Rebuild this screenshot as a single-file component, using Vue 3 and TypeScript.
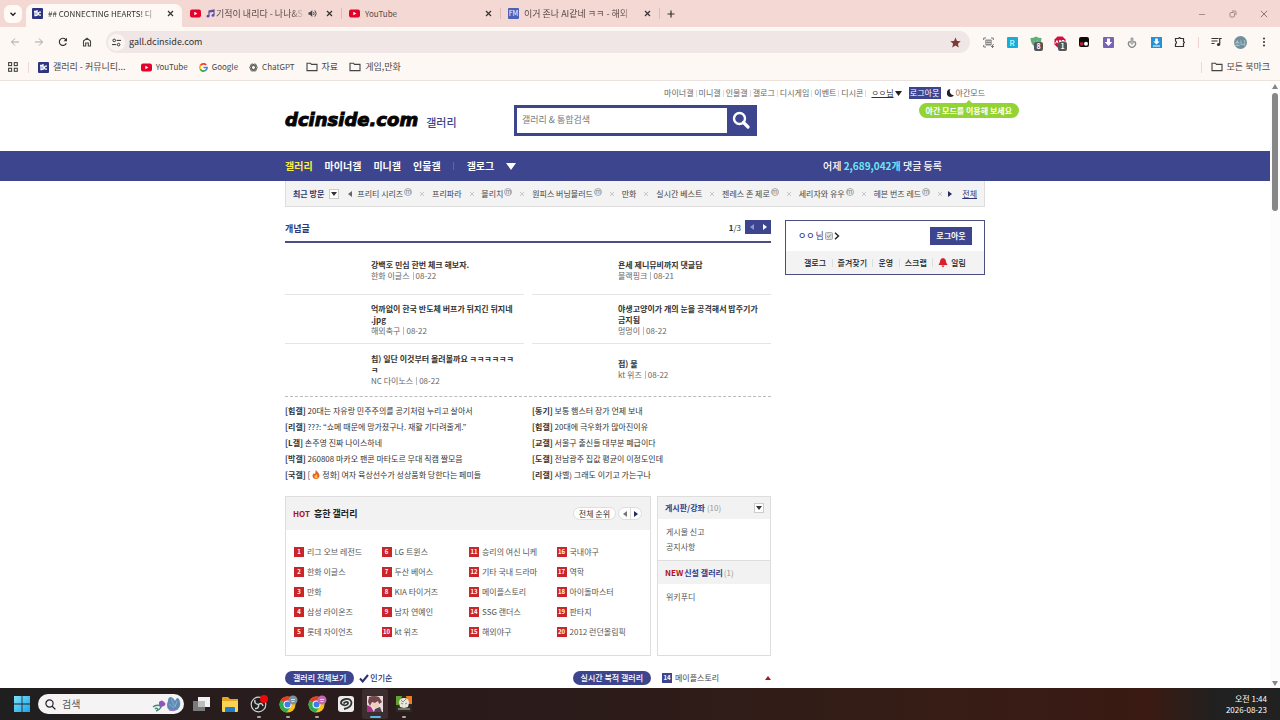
<script setup lang="ts">
interface Tab { icon: 'dc' | 'yt' | 'fm'; title: string; active?: boolean; audio?: boolean; note?: boolean; sep?: boolean; latin?: boolean }
interface Post { title: string; gallery: string; date: string }
interface Line { tag: string; text: string; fire?: boolean }

const tabs: Tab[] = [
  { icon: 'dc', title: '## CONNECTING HEARTS! 디', active: true, latin: true },
  { icon: 'yt', title: '기적이 내리다 - 나나&S', audio: true, note: true, sep: true },
  { icon: 'yt', title: 'YouTube', sep: true, latin: true },
  { icon: 'fm', title: '이거 존나 AI같네 ㅋㅋ - 해외', sep: true },
]
const utils: string[] = ['마이너갤', '미니갤', '인물갤', '갤로그', '디시게임', '이벤트', '디시콘']
const recents: { name: string; minor?: boolean }[] = [
  { name: '프리티 시리즈', minor: true }, { name: '프리파라' }, { name: '블리치', minor: true },
  { name: '원피스 버닝블러드', minor: true }, { name: '만화' }, { name: '실시간 베스트' },
  { name: '젠레스 존 제로', minor: true }, { name: '세리자와 유우', minor: true }, { name: '헤븐 번즈 레드', minor: true },
]
const posts: Post[] = [
  { title: '강백호 민심 한번 체크 해보자.', gallery: '한화 이글스', date: '08-22' },
  { title: '욘세 제니뮤비까지 댓글담', gallery: '블랙핑크', date: '08-21' },
  { title: '억까없이 한국 반도체 버프가 뒤지긴 뒤지네\n.jpg', gallery: '해외축구', date: '08-22' },
  { title: '야생고양이가 개의 눈을 공격해서 밥주기가\n금지됨', gallery: '멍멍이', date: '08-22' },
  { title: '칩) 일단 이것부터 올려볼까요 ㅋㅋㅋㅋㅋㅋ\nㅋ', gallery: 'NC 다이노스', date: '08-22' },
  { title: '접) 물', gallery: 'kt 위즈', date: '08-22' },
]
const lines: Line[] = [
  { tag: '힙갤', text: '20대는 자유랑 민주주의를 공기처럼 누리고 살아서' },
  { tag: '동기', text: '보통 햄스터 장가 언제 보내' },
  { tag: '리갤', text: '???: “쇼메 때문에 망가졌구나. 재활 기다려줄게.”' },
  { tag: '힙갤', text: '20대에 극우화가 많아진이유' },
  { tag: 'L갤', text: '손주영 진짜 나이스하네' },
  { tag: '교갤', text: '서울구 출신들 대부분 폐급이다' },
  { tag: '박갤', text: '260808 마카오 팬콘 마타도르 무대 직캠 짤모음' },
  { tag: '도갤', text: '전남광주 집값 평균이 이정도인데' },
  { tag: '국갤', text: '정화] 여자 육상선수가 성상품화 당한다는 페미들', fire: true },
  { tag: '리갤', text: '샤벨) 그래도 이기고 가는구나' },
]
const hot: string[] = [
  '리그 오브 레전드', '한화 이글스', '만화', '삼성 라이온즈', '롯데 자이언츠',
  'LG 트윈스', '두산 베어스', 'KIA 타이거즈', '남자 연예인', 'kt 위즈',
  '승리의 여신 니케', '기타 국내 드라마', '메이플스토리', 'SSG 랜더스', '해외야구',
  '국내야구', '역학', '아이돌마스터', '판타지', '2012 런던올림픽',
]
</script>

<template>
  <div class="desktop">
    <div class="tabstrip">
      <button class="tab-search" aria-label="탭 검색">
        <svg width="8" height="8" viewBox="0 0 8 8"><path d="M1.5 2.8 4 5.3 6.5 2.8" fill="none" stroke="#222" stroke-width="1.4" /></svg>
      </button>
      <div v-for="(t, i) in tabs" :key="i" class="tab" :class="{ active: t.active, sep: t.sep }">
        <svg v-if="t.icon === 'dc'" class="fav" width="11" height="11" viewBox="0 0 11 11"><rect width="11" height="11" rx="1" fill="#2d3582" /><path d="M2 3.5h1.5c2.4 0 2.4 4 0 4H3V3.5M5 2v6M9 4.2H7.6c-1.4 0-1.4 3 0 3H9" fill="none" stroke="#fff" stroke-width="1.3" /></svg>
        <svg v-else-if="t.icon === 'yt'" class="fav" width="11" height="11" viewBox="0 0 11 11"><rect y="1.5" width="11" height="8" rx="2" fill="#e4002b" /><path d="M4.3 3.7v3.6L7.4 5.5z" fill="#fff" /></svg>
        <span v-else class="fav fm">FM</span>
        <svg v-if="t.note" class="note" width="9" height="9" viewBox="0 0 9 9"><path d="M3 7V2l5-1v5M3 3.2l5-1" fill="none" stroke="#5d4fa0" stroke-width="1.2" /><circle cx="2" cy="7.2" r="1.4" fill="#5d4fa0" /><circle cx="7" cy="6.4" r="1.4" fill="#5d4fa0" /></svg>
        <span class="tab-title" :class="{ latin: t.latin, fade: t.title.length > 10 }">{{ t.title }}</span>
        <svg v-if="t.audio" class="audio" width="10" height="9" viewBox="0 0 10 9"><path d="M.5 3.2H2L4.3 1v7L2 5.8H.5z" fill="#444" /><path d="M5.500 3q1.300 1.500 0 3M6.800 1.400q2.800 3.100 0 6.200" fill="none" stroke="#444" stroke-width="1" /></svg>
        <button class="tab-close" aria-label="탭 닫기"><svg width="7" height="7" viewBox="0 0 7 7"><path d="M1 1l5 5M6 1 1 6" stroke="#333" stroke-width="1.2" /></svg></button>
      </div>
      <button class="new-tab" aria-label="새 탭"><svg width="8" height="8" viewBox="0 0 8 8"><path d="M4 .5v7M.5 4h7" stroke="#333" stroke-width="1.2" /></svg></button>
      <div class="window-btns">
        <button aria-label="최소화"><svg width="8" height="8" viewBox="0 0 8 8"><path d="M1 4.5h6" stroke="#a88f8c" /></svg></button>
        <button aria-label="이전 크기로"><svg width="8" height="8" viewBox="0 0 8 8"><rect x="1" y="2.5" width="4.5" height="4.5" rx="1" fill="none" stroke="#a08885" /><path d="M3 1h3q1 0 1 1v3" fill="none" stroke="#a08885" /></svg></button>
        <button aria-label="닫기"><svg width="8" height="8" viewBox="0 0 8 8"><path d="M.8.8l6.4 6.4M7.2.8.8 7.2" stroke="#8e7774" /></svg></button>
      </div>
    </div>

    <div class="browser-bar">
      <div class="toolbar">
        <button class="tool" aria-label="뒤로"><svg width="10" height="10" viewBox="0 0 10 10"><path d="M9 5H1.5M5 1.5 1.5 5 5 8.5" fill="none" stroke="#aaa5a2" /></svg></button>
        <button class="tool" aria-label="앞으로"><svg width="10" height="10" viewBox="0 0 10 10"><path d="M1 5h7.5M5 1.5 8.5 5 5 8.5" fill="none" stroke="#aaa5a2" /></svg></button>
        <button class="tool" aria-label="새로고침"><svg width="10" height="10" viewBox="0 0 10 10"><path d="M8.3 6.2A3.6 3.6 0 1 1 7.6 2.4L8.6 3.5" fill="none" stroke="#333" stroke-width="1.2" /><path d="M9 .8v3.4H5.6z" fill="#333" /></svg></button>
        <button class="tool" aria-label="홈"><svg width="10" height="10" viewBox="0 0 10 10"><path d="M1.5 4 5 1.2 8.5 4v5H6.3V6H3.7v3H1.5z" fill="none" stroke="#444" stroke-width="1.1" /></svg></button>
        <div class="address">
          <button class="site-info" aria-label="사이트 정보"><svg width="9" height="9" viewBox="0 0 9 9"><circle cx="2.2" cy="2.4" r="1.3" fill="none" stroke="#333" /><path d="M4.7 2.4H9M0 6.6h4.2" stroke="#333" /><circle cx="6.6" cy="6.6" r="1.3" fill="none" stroke="#333" /></svg></button>
          <input type="text" value="gall.dcinside.com" aria-label="주소창">
          <button class="star" aria-label="북마크"><svg width="11" height="11" viewBox="0 0 11 11"><path d="M5.5.5 7 4l3.7.3L7.9 6.700l.9 3.700-3.300-2-3.300 2 .9-3.700L.3 4.300 4 4z" fill="#7c3a32" /></svg></button>
        </div>
        <button class="tool" aria-label="화면 캡처"><svg width="11" height="11" viewBox="0 0 11 11"><path d="M.7 3V1H3M8 1h2.300v2M10.300 7v1M.7 8v2H3M8 9.500h3M9.500 8v3" fill="none" stroke="#777" /><rect x="2.300" y="2.500" width="6.400" height="6" rx="1" fill="#888" /><path d="M3 4.300h5M3 6.500h5" stroke="#ccc" /></svg></button>
        <button class="tool" aria-label="R"><span class="ext cyan">R</span></button>
        <button class="tool badge-host" aria-label="보호"><svg width="12" height="12" viewBox="0 0 12 12"><path d="M.5 2Q3.500 2 6 .5 8.500 2 11.500 2 11.500 9 6 11 .5 9 .5 2" fill="#5fae79" /><path d="M3.500 4.500l2 2 3-3" fill="none" stroke="#7fc596" /></svg><span class="count">8</span></button>
        <button class="tool badge-host" aria-label="차단"><svg width="12" height="12" viewBox="0 0 12 12"><path d="M3.500.5h5L11.500 3.500v5l-3 3h-5l-3-3v-5z" fill="#d0103f" /><path d="M1.500 7.500 3 4.500l1.200 3M5.500 4.500v3h1v-3zM8 4.500v3h2v-3z" fill="none" stroke="#fff" /></svg><span class="count">1</span></button>
        <button class="tool" aria-label="스크립트"><svg width="10" height="10" viewBox="0 0 10 10"><rect width="10" height="10" rx="2" fill="#0c0c0c" /><circle cx="2.700" cy="6.800" r="1.900" fill="#b5232b" /><circle cx="7" cy="6.800" r="2" fill="#fff" /></svg></button>
        <button class="tool" aria-label="다운로더"><svg width="11" height="11" viewBox="0 0 11 11"><rect width="11" height="11" rx="1" fill="#7a62b5" /><path d="M4 1.500h3V5h2.300L5.500 9 1.700 5H4z" fill="#fff" /></svg></button>
        <button class="tool" aria-label="저장"><svg width="10" height="11" viewBox="0 0 10 11"><path d="M4 1h2v3.500h1.700L5 7.500 2.300 4.500H4z" fill="#bbb" stroke="#888" stroke-width=".7" /><path d="M2.300 4.500A3.500 3.500 0 1 0 7.700 4.500" fill="none" stroke="#888" stroke-width="1.300" /></svg></button>
        <button class="tool" aria-label="내려받기"><svg width="11" height="11" viewBox="0 0 11 11"><rect width="11" height="11" fill="#2592d8" /><path d="M4.200 1.500h2.600v3h1.900L5.500 7.500 2.300 4.500h1.900zM2 8.500h7v1H2z" fill="#fff" /></svg></button>
        <button class="tool" aria-label="확장 프로그램"><svg width="12" height="12" viewBox="0 0 12 12"><path d="M1.500 2.500H4.700Q5.500.6 6.500 2.500H9.500V5.500Q11.500 6.300 9.500 7.300V10.500H1.500V8Q3.500 6.500 1.500 5z" fill="none" stroke="#333" stroke-width="1.200" /></svg></button>
        <span class="tool-sep"></span>
        <button class="tool" aria-label="미디어"><svg width="11" height="10" viewBox="0 0 11 10"><path d="M.5 1.500h7M.5 4h6M.5 6.500h3M8.700 7.500v-6h2" fill="none" stroke="#333" stroke-width="1.200" /><circle cx="7.500" cy="7.500" r="1.600" fill="#333" /></svg></button>
        <button class="tool" aria-label="프로필"><span class="avatar">소니</span></button>
        <button class="tool" aria-label="메뉴"><svg width="4" height="10" viewBox="0 0 4 10"><g fill="#333"><circle cx="2" cy="1.500" r="1" /><circle cx="2" cy="5" r="1" /><circle cx="2" cy="8.500" r="1" /></g></svg></button>
      </div>
      <nav class="bookmarks" aria-label="북마크">
        <button class="apps" aria-label="앱"><svg width="10" height="10" viewBox="0 0 10 10"><g fill="none" stroke="#444" stroke-width="1.100"><rect x=".6" y=".6" width="3" height="3" /><rect x="6.300" y=".6" width="3" height="3" /><rect x=".6" y="6.300" width="3" height="3" /><rect x="6.300" y="6.300" width="3" height="3" /></g></svg></button>
        <span class="bm-sep"></span>
        <a href="#" class="first"><svg width="11" height="11" viewBox="0 0 11 11"><rect width="11" height="11" rx="1" fill="#2d3582" /><path d="M2 3.500h1.500c2.400 0 2.400 4 0 4H3V3.500M5 2v6M9 4.200H7.600c-1.400 0-1.400 3 0 3H9" fill="none" stroke="#fff" stroke-width="1.300" /></svg>갤러리 - 커뮤니티...</a>
        <a href="#" class="latin"><svg width="11" height="11" viewBox="0 0 11 11"><rect y="1.500" width="11" height="8" rx="2" fill="#e4002b" /><path d="M4.300 3.700v3.600L7.400 5.500z" fill="#fff" /></svg>YouTube</a>
        <a href="#" class="latin"><svg width="9" height="9" viewBox="0 0 10 10"><g fill="none" stroke-width="1.900"><path d="M8 2.200A4 4 0 0 0 1.500 3" stroke="#ea4335" /><path d="M1.500 3a4 4 0 0 0 0 4" stroke="#fbbc05" /><path d="M1.500 7A4 4 0 0 0 7.600 8" stroke="#34a853" /><path d="M7.600 8A4 4 0 0 0 9 5H5" stroke="#4285f4" /></g></svg>Google</a>
        <a href="#" class="latin"><svg width="9" height="9" viewBox="0 0 10 10"><g fill="none" stroke="#555"><ellipse cx="5" cy="5" rx="4.300" ry="2.200" /><ellipse cx="5" cy="5" rx="4.300" ry="2.200" transform="rotate(60 5 5)" /><ellipse cx="5" cy="5" rx="4.300" ry="2.200" transform="rotate(120 5 5)" /></g></svg>ChatGPT</a>
        <a href="#"><svg width="12" height="10" viewBox="0 0 12 10"><path d="M1 1.200h3.500l1 1.200H11v6.200H1z" fill="none" stroke="#444" stroke-width="1.100" /></svg>자료</a>
        <a href="#"><svg width="12" height="10" viewBox="0 0 12 10"><path d="M1 1.200h3.500l1 1.200H11v6.200H1z" fill="none" stroke="#444" stroke-width="1.100" /></svg>게임,만화</a>
        <span class="bm-sep push"></span>
        <a href="#" class="all"><svg width="12" height="10" viewBox="0 0 12 10"><path d="M1 1.200h3.500l1 1.200H11v6.200H1z" fill="none" stroke="#444" stroke-width="1.100" /></svg>모든 북마크</a>
      </nav>
    </div>

    <div class="viewport">
      <div class="page">
        <header class="wrap head">
          <div class="util">
            <a v-for="u in utils" :key="u" href="#" class="ulink">{{ u }}</a>
            <button class="user"><u>ㅇㅇ님</u><svg width="7" height="5" viewBox="0 0 7 5"><path d="M0 0h7L3.500 5z" fill="#222" /></svg></button>
            <button class="logout-sm">로그아웃</button>
            <a href="#" class="night"><svg width="7" height="8" viewBox="0 0 7 8"><path d="M3.500 0A4 4 0 1 0 7 6.200 4 4 0 0 1 3.500 0" fill="#222" /></svg>야간모드<span class="tip">야간 모드를 이용해 보세요</span></a>
          </div>
          <div class="brand">
            <a href="#" class="logo">dcinside.com</a><a href="#" class="logo-sub">갤러리</a>
            <form class="search" @submit.prevent>
              <input type="text" placeholder="갤러리 &amp; 통합검색" aria-label="갤러리 &amp; 통합검색">
              <button aria-label="검색"><svg width="18" height="18" viewBox="0 0 18 18"><circle cx="7.500" cy="7.500" r="5.500" fill="none" stroke="#fff" stroke-width="2.400" /><path d="M11.500 11.500l4.500 4.500" stroke="#fff" stroke-width="3.200" stroke-linecap="round" /></svg></button>
            </form>
          </div>
        </header>

        <nav class="gnb">
          <div class="wrap gnb-in">
            <a href="#" class="on">갤러리</a><a href="#">마이너갤</a><a href="#">미니갤</a><a href="#">인물갤</a>
            <span class="gnb-sep"></span>
            <a href="#">갤로그</a>
            <button aria-label="더보기"><svg width="10" height="7" viewBox="0 0 10 7"><path d="M0 0h10L5 7z" fill="#fff" /></svg></button>
            <p class="total">어제 <b>2,689,042개</b> 댓글 등록</p>
          </div>
        </nav>

        <div class="wrap recent">
          <strong>최근 방문</strong>
          <button class="drop" aria-label="최근 방문 목록"><svg width="6" height="4" viewBox="0 0 6 4"><path d="M0 0h6L3 4z" fill="#333" /></svg></button>
          <button class="arr" aria-label="이전"><svg width="4" height="6" viewBox="0 0 4 6"><path d="M4 0v6L0 3z" fill="#666" /></svg></button>
          <ul>
            <li v-for="r in recents" :key="r.name"><a href="#">{{ r.name }}</a><i v-if="r.minor">m</i><button aria-label="삭제"><svg width="4" height="4" viewBox="0 0 4 4"><path d="M0 0l4 4M4 0 0 4" stroke="#bbb" stroke-width=".8" /></svg></button></li>
          </ul>
          <button class="arr" aria-label="다음"><svg width="4" height="6" viewBox="0 0 4 6"><path d="M0 0v6l4-3z" fill="#222a60" /></svg></button>
          <a href="#" class="all-link">전체</a>
        </div>

        <main class="wrap body">
          <div class="left">
            <section>
              <div class="sec-head">
                <h2>개념글</h2>
                <span class="pager"><b>1</b>/3</span>
                <span class="pg-btns">
                  <button aria-label="이전"><svg width="4" height="6" viewBox="0 0 4 6"><path d="M4 0v6L0 3z" fill="#8f96d0" /></svg></button>
                  <button aria-label="다음"><svg width="4" height="6" viewBox="0 0 4 6"><path d="M0 0v6l4-3z" fill="#fff" /></svg></button>
                </span>
              </div>
              <div class="posts">
                <article v-for="p in posts" :key="p.title">
                  <a href="#">{{ p.title }}</a>
                  <p>{{ p.gallery }}<span class="bar"></span>{{ p.date }}</p>
                </article>
              </div>
              <ul class="lines">
                <li v-for="(l, i) in lines" :key="i"><a href="#"><b>[{{ l.tag }}]</b> <template v-if="l.fire">[<svg class="fire" width="8" height="9" viewBox="0 0 8 9"><path d="M3.500 0Q7.500 3 7.500 6 7 9 4 9 .5 8.500.5 5.700.700 4 2 3 2 4 2.800 4.300 4 2.500 3.500 0" fill="#e8622a" /><path d="M4.300 4Q6 6 5.500 7.500 4.500 9 3 8 1.800 6.500 3 5.500 4 5.500 4.300 4" fill="#fbc23a" /></svg></template>{{ l.text }}</a></li>
              </ul>
            </section>

            <div class="boxes">
              <section class="hot">
                <div class="hot-head">
                  <h2><em>HOT</em>흥한 갤러리</h2>
                  <button class="rank">전체 순위</button>
                  <span class="mini-pg">
                    <button aria-label="이전"><svg width="4" height="6" viewBox="0 0 4 6"><path d="M4 0v6L0 3z" fill="#777" /></svg></button>
                    <button aria-label="다음"><svg width="4" height="6" viewBox="0 0 4 6"><path d="M0 0v6l4-3z" fill="#222a60" /></svg></button>
                  </span>
                </div>
                <ol>
                  <li v-for="(h, i) in hot" :key="h"><span class="num">{{ i + 1 }}</span><a href="#">{{ h }}</a></li>
                </ol>
              </section>
              <section class="side">
                <h3>게시판/강좌 <small>(10)</small><button class="drop" aria-label="펼치기"><svg width="6" height="4" viewBox="0 0 6 4"><path d="M0 0h6L3 4z" fill="#333" /></svg></button></h3>
                <ul><li><a href="#">게시물 신고</a></li><li><a href="#">공지사항</a></li></ul>
                <h3 class="second"><em>NEW</em>신설 갤러리 <small>(1)</small></h3>
                <ul><li><a href="#">위키푸디</a></li></ul>
              </section>
            </div>

            <div class="foot">
              <button class="pill">갤러리 전체보기</button>
              <button class="sort"><svg width="10" height="9" viewBox="0 0 10 9"><path d="M1 4.500 3.700 7.500 9 1" fill="none" stroke="#29306f" stroke-width="2" /></svg>인기순</button>
              <button class="pill live">실시간 북적 갤러리</button>
              <a href="#" class="rising"><span class="num">14</span>메이플스토리</a>
              <svg class="up" width="6" height="4" viewBox="0 0 6 4"><path d="M0 4h6L3 0z" fill="#b01217" /></svg>
            </div>
          </div>

          <aside class="login">
            <div class="login-top">
              <a href="#"><b>ㅇㅇ</b>님<svg width="8" height="8" viewBox="0 0 8 8"><rect x=".5" y=".5" width="7" height="7" rx="1" fill="#ddd" stroke="#aaa" /><path d="M2 4l1.500 1.500L6 2.500" fill="none" stroke="#888" /></svg><svg width="6" height="8" viewBox="0 0 6 8"><path d="M1 .7 4.500 4 1 7.300" fill="none" stroke="#222" stroke-width="1.400" /></svg></a>
              <button>로그아웃</button>
            </div>
            <div class="login-links">
              <a href="#">갤로그</a><a href="#">즐겨찾기</a><a href="#">운영</a><a href="#">스크랩</a>
              <a href="#"><svg width="10" height="9" viewBox="0 0 10 9"><path d="M5 0Q8 .5 8 4l1.500 3h-9L2 4Q2 .5 5 0M3.500 7.500h3Q6 9 5 9T3.500 7.500" fill="#d8202a" /></svg>알림</a>
            </div>
          </aside>
        </main>
      </div>
      <div class="scrollbar">
        <svg width="6" height="5" viewBox="0 0 6 5"><path d="M0 5h6L3 0z" fill="#858585" /></svg>
        <div class="thumb"></div>
        <svg class="down" width="6" height="5" viewBox="0 0 6 5"><path d="M0 0h6L3 5z" fill="#858585" /></svg>
      </div>
    </div>

    <div class="taskbar">
      <button class="start" aria-label="시작"><svg width="16" height="16" viewBox="0 0 16 16"><defs><linearGradient id="win" x2="1" y2="1"><stop stop-color="#7fe0fb" /><stop offset="1" stop-color="#18a4ea" /></linearGradient></defs><path d="M0 0h7.600v7.600H0zM8.400 0H16v7.600H8.400zM0 8.400h7.600V16H0zM8.400 8.400H16V16H8.400z" fill="url(#win)" /></svg></button>
      <label class="task-search">
        <svg width="11" height="11" viewBox="0 0 11 11"><circle cx="4.500" cy="4.500" r="3.600" fill="none" stroke="#222" stroke-width="1.200" /><path d="M7.200 7.200 10.400 10.400" stroke="#222" stroke-width="1.300" /></svg>
        <input type="text" placeholder="검색" aria-label="검색">
        <svg width="29" height="17" viewBox="0 0 29 17"><path d="M10 9Q8 14 4 15M9 10Q4 8 1 11M6 14Q5 11 3 13" fill="none" stroke="#3f8f78" stroke-width="1.400" /><path d="M7 6q3-3 5 0 3 2 0 4-4 2-5-1z" fill="#9553bd" /><path d="M16 5Q16 1 19 1 22 2 23 5 25 0 27 3 30 9 26 13 20 16 16 13 14 9 16 5" fill="#5c8bb4" /><path d="M19 3l4 8M25 5l-2 6M17 8l5 4" stroke="#8fa9cf" fill="none" /><path d="M17 14q4 2 9-1" stroke="#a56cc0" fill="none" /></svg>
      </label>
      <button aria-label="작업 보기"><svg width="17" height="16" viewBox="0 0 17 16"><rect x="5" y="1" width="12" height="10" fill="#f2f2f2" /><rect y="5" width="12" height="10" fill="#858585" opacity=".9" /><rect x="5" y="5" width="7" height="6" fill="#bdbdbd" /></svg></button>
      <button aria-label="파일 탐색기"><svg width="16" height="15" viewBox="0 0 16 15"><path d="M0 1q0-1 1-1h5l2 2h8v12H0z" fill="#e5a520" /><path d="M0 4h16v10q0 1-1 1H1q-1 0-1-1z" fill="#fbd255" /><path d="M3 11q0-1 1-1h8q1 0 1 1v4H3z" fill="#1f7fc4" /></svg></button>
      <button class="run" aria-label="OBS"><svg width="18" height="18" viewBox="0 0 18 18"><circle cx="8.500" cy="9.500" r="7.300" fill="#202020" stroke="#d0d0d0" stroke-width="1.200" /><path d="M8.500 9.500Q4 9 5 5M8.500 9.500Q12 7 13 11M8.500 9.500Q9 14 5 13.500" fill="none" stroke="#d0d0d0" stroke-width="1.500" /><circle cx="14" cy="4" r="4" fill="#f00808" /></svg></button>
      <button v-for="n in 2" :key="n" class="run" aria-label="Chrome"><svg width="19" height="18" viewBox="0 0 19 18"><circle cx="8.500" cy="9.500" r="8" fill="#fbc116" /><path d="M8.500 9.500 1.600 5.500A8 8 0 0 1 15.400 5.500z" fill="#e33b2e" /><path d="M8.500 9.500 1.600 5.500A8 8 0 0 0 7.500 17.500L12 11.500z" fill="#2da94f" /><circle cx="8.500" cy="9.500" r="4" fill="#fff" /><circle cx="8.500" cy="9.500" r="3" fill="#3b7ded" /><circle cx="14" cy="5" r="4.500" :fill="n === 1 ? '#7d929d' : '#c26ab0'" /><path d="M12 4.500h4M12.500 6.500h3" stroke="#d8dfe4" /></svg></button>
      <button aria-label="클립 스튜디오"><svg width="16" height="16" viewBox="0 0 16 16"><rect width="16" height="16" rx="3" fill="#ececec" /><path d="M6 13Q13.500 11.500 13.500 6.500 12.500 2.500 8 3 2.500 4 3 7.500 5 10 8.500 9 11 7.500 9.500 6 7.500 5.500 5.500 7.500" fill="none" stroke="#333" stroke-width="1.800" /></svg></button>
      <button class="run current" aria-label="게임"><svg width="16" height="16" viewBox="0 0 16 16"><rect width="16" height="16" fill="#e9dcdc" /><path d="M2 1Q7-1 12 1L15 6 12 8 11 5 8 7 5 6 3 10 1 6z" fill="#74464a" /><path d="M5 7l3 0 3-1 1 4-3 2-4-1z" fill="#f2cdbd" /><path d="M0 9l4 2 3 5H0z" fill="#a92f88" /><path d="M8 13l5-2 2 5H7z" fill="#574150" /></svg></button>
      <button class="run" aria-label="게임 2"><svg width="16" height="16" viewBox="0 0 16 16"><rect width="16" height="16" fill="#2c2a22" /><path d="M0 0h6L3 9H0z" fill="#63a239" /><path d="M10 0h6v8h-4z" fill="#f07b1e" /><path d="M3 7Q3 2 8 2T13 7L12 11 8 12 4 11z" fill="#e9e7df" /><path d="M5 7l2 1M9 8l2-1M5 4l2 2 3-3" fill="none" stroke="#8a8a86" /><path d="M2 13h12" stroke="#c7c2a5" /></svg></button>
      <div class="clock"><span>오전 1:44</span><span>2026-08-23</span></div>
    </div>
  </div>
</template>

<style>
body { margin: 0; background: #fff; }
</style>

<style scoped>
.desktop { display: flex; flex-direction: column; height: 100vh; overflow: hidden; font-family: "Noto Sans CJK KR", "Noto Sans", sans-serif; font-size: 8px; line-height: 12px; color: #333; white-space: nowrap; }
* { box-sizing: border-box; }
button { font: inherit; color: inherit; border: 0; background: none; padding: 0; margin: 0; display: flex; align-items: center; justify-content: center; flex: none; }
input { font: inherit; border: 0; background: none; padding: 0; min-width: 0; outline: 0; }
a { color: inherit; text-decoration: none; }
ul, ol { list-style: none; margin: 0; padding: 0; }
h2, h3, p { margin: 0; font-size: inherit; }
svg { flex: none; display: block; }

.tabstrip { display: flex; align-items: center; height: 27px; background: #f3d8d4; flex: none; padding-left: 4px; }
.tab-search { width: 18px; height: 18px; border-radius: 6px; background: #fffaf6; }
.tab { position: relative; display: flex; align-items: center; width: 159px; height: 23px; margin-top: 4px; padding: 0 5px 4px 8px; color: #5c4a48; font-size: 9px; }
.tab.active { margin-left: 4px; width: 156px; padding-left: 6px; background: #fdf8f3; border-radius: 7px 7px 0 0; color: #333; }
.tab.sep::after { content: ""; position: absolute; right: -1px; top: 4px; width: 1px; height: 11px; background: #d9bdb9; }
.fav { flex: none; margin-right: 5px; }
.fm { width: 11px; height: 11px; background: #4a62b8; color: #fff; font-size: 7px; line-height: 11px; text-align: center; border-radius: 1px; }
.note { margin-right: 1px; }
.tab-title { flex: 1; }
.fade { -webkit-mask-image: linear-gradient(to right, #000 85%, transparent); mask-image: linear-gradient(to right, #000 85%, transparent); }
.latin { font-size: 8px; }
.audio { margin-left: 3px; }
.tab-close { width: 14px; height: 14px; margin-left: 4px; }
.new-tab { width: 20px; height: 18px; margin-left: 2px; }
.window-btns { margin-left: auto; display: flex; padding-right: 1px; }
.window-btns button { width: 31px; height: 20px; }

.browser-bar { flex: none; background: #fdf8f3; border-bottom: 1px solid #ebe2de; height: 54px; }
.toolbar { display: flex; align-items: center; height: 30px; padding: 0 4px 0 3px; }
.tool { width: 24px; height: 24px; }
.address { flex: 1; display: flex; align-items: center; height: 22px; margin: 0 6px 0 7px; padding: 0 9px 0 2px; background: #efe6e5; border-radius: 11px; min-width: 0; }
.site-info { width: 17px; height: 17px; border-radius: 9px; background: #fbf5f1; margin-right: 4px; }
.address input { flex: 1; font-size: 9px; color: #333; }
.ext { width: 11px; height: 11px; border-radius: 1px; color: #fff; font-size: 8px; line-height: 11px; }
.cyan { background: #16add6; }
.badge-host { position: relative; }
.count { position: absolute; left: 10px; top: 12px; width: 9px; height: 9px; border-radius: 2px; background: #555; color: #fff; font-size: 7px; font-weight: 700; line-height: 9px; }
.tool-sep { width: 1px; height: 11px; background: #efd5d2; margin: 0 5px 0 6px; }
.avatar { width: 13px; height: 13px; border-radius: 50%; background: #728f9d; color: #d6e0e5; font-size: 6px; line-height: 13px; }
.bookmarks { display: flex; align-items: center; height: 20px; padding: 0 10px 0 8px; font-size: 9px; color: #4b4644; }
.bookmarks a { display: flex; align-items: center; gap: 4px; margin-right: 11px; }
.bookmarks a.first { margin-right: 15px; }
.bookmarks a.all { margin-right: 0; }
.bm-sep { width: 1px; height: 11px; background: #ecd8d4; margin: 0 9px 0 10px; }
.bm-sep.push { margin-left: auto; }

.viewport { flex: 1; min-height: 0; display: flex; background: #fff; }
.page { flex: 1; min-width: 0; overflow: hidden; }
.scrollbar { width: 10px; flex: none; display: flex; flex-direction: column; align-items: center; padding: 3px 0 2px; background: #fcfcfc; }
.thumb { width: 6px; height: 118px; margin-top: 4px; border-radius: 3px; background: #878787; }
.down { margin-top: auto; }
.wrap { width: 700px; margin: 0 auto; }

.head { height: 70px; padding-top: 6px; }
.util { display: flex; align-items: center; justify-content: flex-end; height: 12px; color: #666; }
.ulink { padding-right: 3px; margin-right: 2px; position: relative; }
.ulink::after { content: ""; position: absolute; right: 0; top: 3px; width: 1px; height: 7px; background: #ddd; }
.user { margin-left: 3px; gap: 1px; color: #333; }
.logout-sm { margin: 0 6px 0 7px; width: 32px; height: 12px; background: #3c458e; color: #fff; }
.night { position: relative; display: flex; align-items: center; gap: 2px; }
.tip { position: absolute; right: -34px; top: 16px; height: 15px; padding: 0 7px; border-radius: 8px; background: #93d334; color: #fff; font-weight: 700; line-height: 15px; }
.tip::before { content: ""; position: absolute; left: 47px; top: -3px; border: 3px solid transparent; border-top: 0; border-bottom-color: #93d334; }
.brand { display: flex; align-items: center; height: 30px; margin-top: 6px; }
.logo { font-family: "DejaVu Sans", sans-serif; font-weight: 700; font-style: italic; font-size: 18px; line-height: 30px; color: #050505; -webkit-text-stroke: 1px #050505; }
.logo-sub { margin: 4px 0 0 8px; font-size: 11px; font-weight: 500; color: #3c458e; }
.search { display: flex; width: 243px; height: 31px; margin-left: auto; margin-right: 228px; border: 3px solid #3c458e; background: #3c458e; }
.search input { flex: 1; background: #fff; padding-left: 5px; font-size: 9px; }
.search input::placeholder { color: #777; opacity: 1; }
.search button { width: 27px; }

.gnb { background: #3c458e; color: #fff; }
.gnb-in { display: flex; align-items: center; height: 30px; gap: 12px; font-size: 10px; font-weight: 700; }
.gnb-in .on { color: #ffed44; }
.gnb-sep { width: 1px; height: 8px; margin-right: 1px; background: #5d68ab; }
.total { margin-left: auto; margin-right: 43px; font-weight: 500; }
.total b { color: #6ce6f4; }

.recent { display: flex; align-items: center; height: 26px; border: 1px solid #ddd; border-top: 0; background: #f3f3f3; padding: 0 7px; }
.recent strong { color: #2c3670; margin-right: 5px; }
.drop { width: 10px; height: 10px; background: #fff; border: 1px solid #ccc; }
.recent .arr { width: 4px; margin-left: 9px; }
.recent ul { flex: 1; display: flex; justify-content: space-between; margin-left: 5px; }
.recent ul + .arr { margin-left: 6px; }
.recent li { display: flex; align-items: center; color: #444; }
.recent i { width: 8px; height: 8px; margin: -3px 0 0 1px; border: 1px solid #aaa; border-radius: 50%; font-size: 6px; font-style: normal; line-height: 5px; text-align: center; color: #777; }
.recent li button { margin-left: 8px; }
.all-link { margin-left: 10px; color: #2c3670; text-decoration: underline; }

.body { display: grid; grid-template-columns: 486px 200px; justify-content: space-between; align-items: start; padding-top: 13px; }
.sec-head { display: flex; align-items: flex-start; height: 23px; border-bottom: 2px solid #4b4f80; }
.sec-head h2 { font-size: 9px; color: #2f3875; margin-top: 3px; }
.pager { margin: 2px 4px 0 auto; }
.pg-btns { display: flex; background: #3c458e; }
.pg-btns button { width: 13px; height: 14px; }
.posts { display: grid; grid-template-columns: 1fr 1fr; column-gap: 8px; grid-template-rows: 52px 49px 52px; border-bottom: 1px dashed #bbb; line-height: 11px; }
.posts article { display: flex; flex-direction: column; justify-content: center; padding: 3px 0 0 86px; border-bottom: 1px solid #e5e5e5; }
.posts article:nth-child(n+3) { padding-top: 0; }
.posts article:nth-child(n+5) { border-bottom: 0; padding-bottom: 2px; }
.posts article a { white-space: pre-line; font-weight: 700; color: #333; word-break: keep-all; }
.posts p { color: #666; }
.bar { display: inline-block; width: 1px; height: 8px; margin: 0 2px 0 3px; background: #bbb; vertical-align: -1px; }
.lines { display: grid; grid-template-columns: 1fr 1fr; column-gap: 8px; grid-auto-rows: 16px; line-height: 16px; padding-top: 6px; }
.fire { display: inline-block; vertical-align: -1px; margin: 0 2px; }

.boxes { display: flex; gap: 6px; margin-top: 13px; height: 160px; }
.hot { width: 366px; border: 1px solid #ddd; }
.hot-head { display: flex; align-items: center; height: 33px; padding: 0 8px 0 7px; background: #f2f2f2; }
.hot-head h2 { flex: 1; display: flex; gap: 4px; font-size: 9px; color: #222; }
em { font-style: normal; color: #b01217; font-size: 8px; font-weight: 700; }
.rank { height: 13px; padding: 0 5px; border: 1px solid #ddd; border-radius: 7px; background: #fff; }
.mini-pg { display: flex; margin-left: 2px; height: 13px; border: 1px solid #ddd; border-radius: 7px; background: #fff; }
.mini-pg button { width: 11px; }
.mini-pg button + button { border-left: 1px solid #ddd; }
.hot ol { display: grid; grid-template-columns: repeat(4, 1fr); grid-template-rows: repeat(5, 20px); grid-auto-flow: column; padding: 12px 6px 0 8px; color: #555; }
.hot li { display: flex; align-items: center; gap: 3px; }
.num { width: 10px; height: 10px; background: #c9252b; color: #fff; font-size: 6px; font-weight: 700; line-height: 10px; text-align: center; }
.side { flex: 1; border: 1px solid #ddd; color: #555; }
.side h3 { display: flex; align-items: center; gap: 2px; height: 22px; padding: 0 6px 0 7px; background: #f2f2f2; color: #2f3b8a; }
.side h3.second { height: 24px; border-top: 1px solid #ddd; gap: 1px; }
.side small { font-size: 8px; font-weight: 400; color: #999; }
.side h3 .drop { margin-left: auto; }
.side ul { padding: 5px 8px 0; line-height: 15px; height: 41px; }

.foot { display: flex; align-items: center; height: 14px; margin-top: 15px; }
.pill { height: 14px; padding: 0 8px; border-radius: 7px; background: #3c458e; color: #fff; font-weight: 500; }
.pill.live { margin-left: auto; }
.sort { margin-left: 5px; gap: 1px; font-weight: 500; color: #29306f; }
.rising { display: flex; align-items: center; gap: 3px; width: 103px; margin-left: 11px; color: #444; }
.rising .num { background: #3c458e; }

.login { border: 1px solid #4b4f80; }
.login-top { display: flex; align-items: center; justify-content: space-between; height: 30px; padding: 0 12px; font-size: 9px; color: #2f3875; }
.login-top a { display: flex; align-items: center; gap: 1px; }
.login-top b { font-weight: 500; }
.login-top button { width: 42px; height: 18px; background: #3c458e; color: #fff; font-size: 8px; font-weight: 700; }
.login-links { display: flex; align-items: center; justify-content: space-between; height: 23px; padding: 0 18px; background: #f3f3f3; font-weight: 500; color: #222; }
.login-links a { display: flex; align-items: center; gap: 3px; }
.login-links a + a { border-left: 1px solid #ddd; padding-left: 5px; line-height: 8px; }

.taskbar { flex: none; display: flex; align-items: center; height: 32px; padding: 0 13px 0 14px; background: linear-gradient(to right, #201f20 0, #291c1c 20%, #2b1b1a 45%, #351d16 70%, #3a1a13 90%, #202120 95%); color: #fff; }
.taskbar button { width: 26px; height: 30px; margin-right: 3px; position: relative; }
.taskbar .start { width: 16px; margin-right: 8px; }
.task-search { display: flex; align-items: center; width: 146px; height: 20px; margin-right: 4px; padding: 0 3px 0 7px; border-radius: 10px; background: #f5f3f4; color: #444; }
.task-search input { flex: 1; margin-left: 6px; font-size: 10px; }
.task-search input::placeholder { color: #555; opacity: 1; }
.run::after { content: ""; position: absolute; bottom: 1px; left: 11px; width: 4px; height: 2px; border-radius: 1px; background: #aaa; }
.current { background: #3d2d2e; border-radius: 3px; }
.current::after { left: 8px; width: 11px; background: #56b9e6; }
.clock { display: flex; flex-direction: column; align-items: flex-end; margin-left: auto; line-height: 11px; }
</style>
